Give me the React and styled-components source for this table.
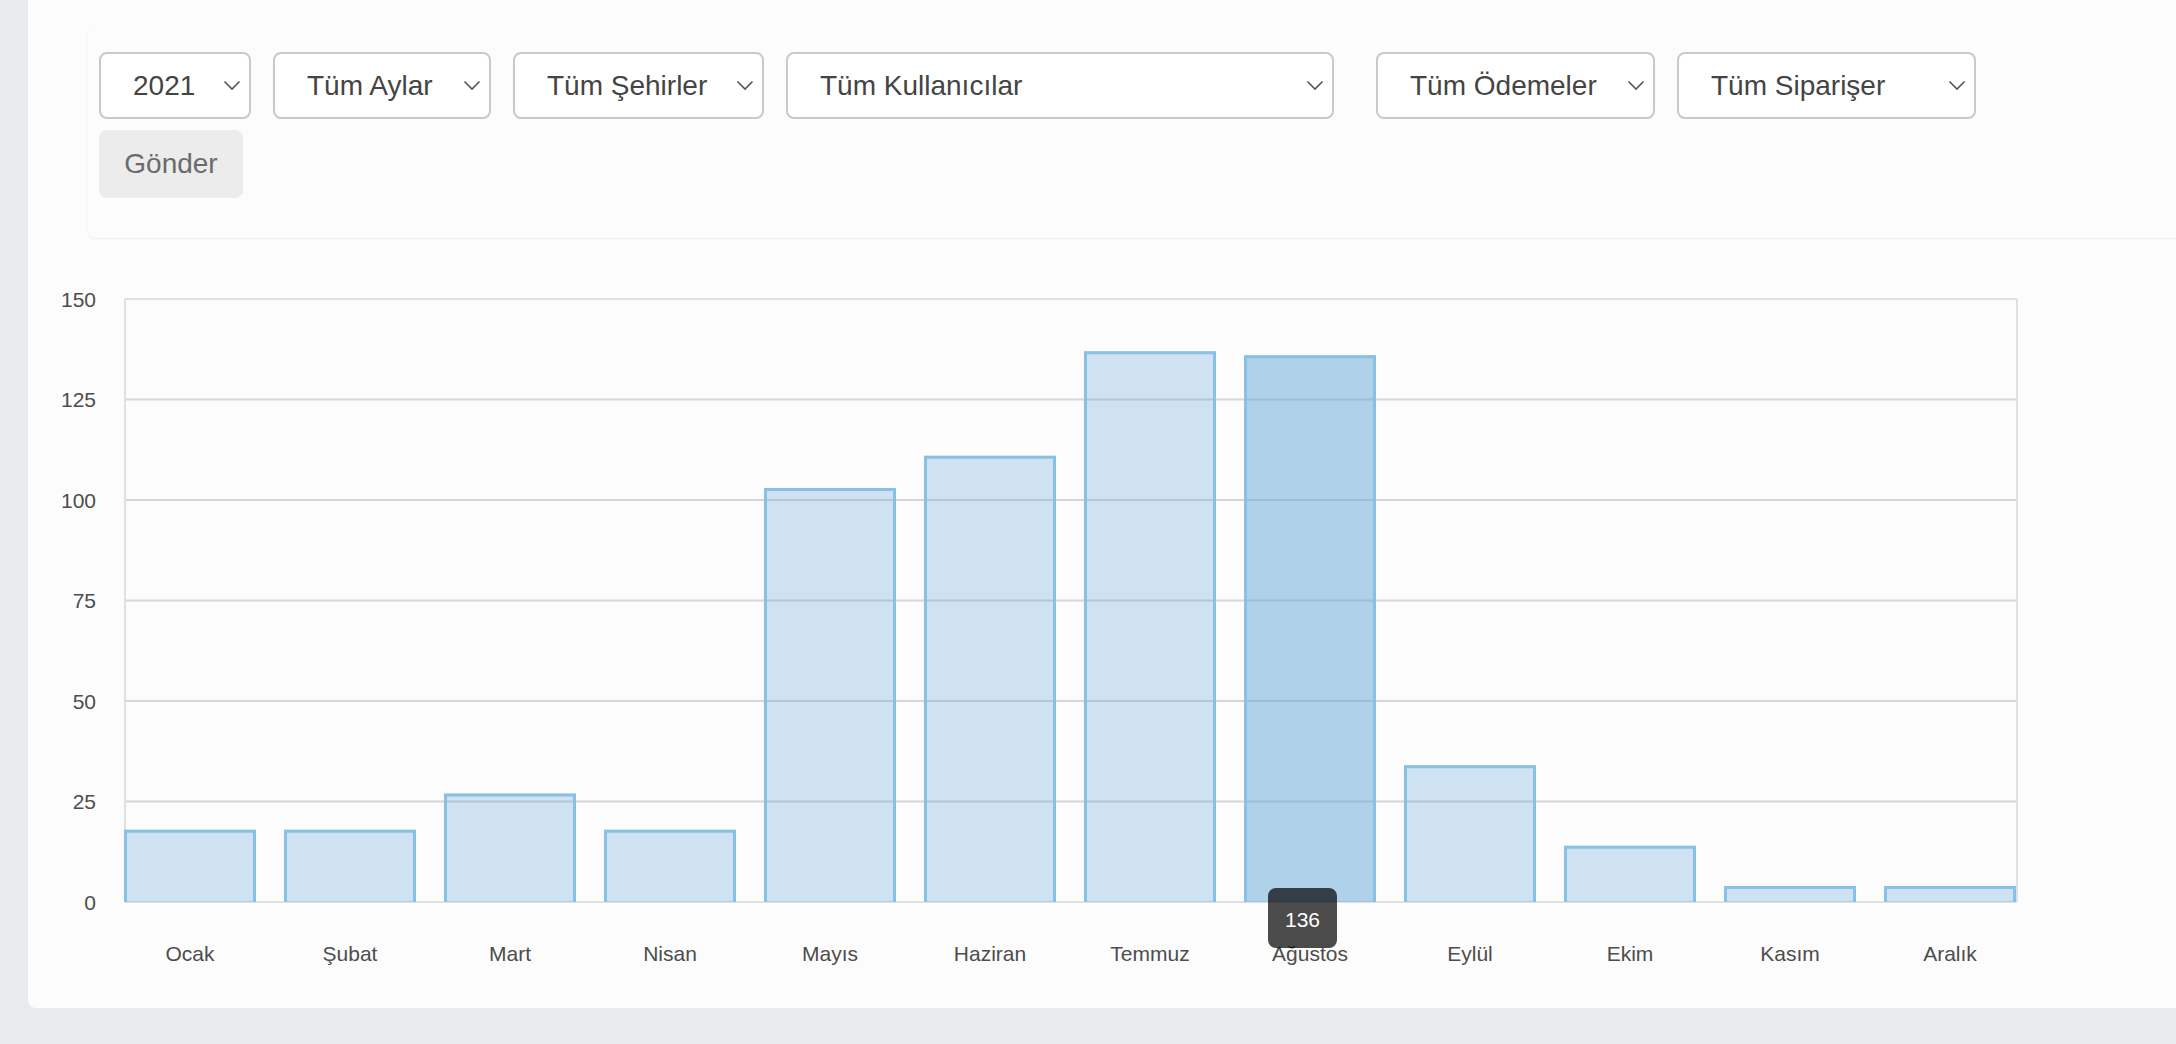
import React from 'react';
import styled, { createGlobalStyle } from 'styled-components';

const GlobalStyle = createGlobalStyle`
  html, body {
    margin: 0;
    padding: 0;
    background: #e9eaee;
    overflow: hidden;
  }
  body {
    font-family: "Liberation Sans", Arial, sans-serif;
  }
`;

const Page = styled.div`
  display: flex;
  height: 1044px;
  padding-left: 28px;
`;

const Panel = styled.div`
  flex: 1;
  height: 1008px;
  background: #fcfcfc;
  border-bottom-left-radius: 8px;
  padding-top: 27px;
  box-sizing: border-box;
  display: flex;
  flex-direction: column;
  overflow: hidden;
`;

const FilterCard = styled.div`
  margin-left: 60px;
  margin-right: -20px;
  padding: 25px 11px 40px;
  background: #fcfcfc;
  border-radius: 8px;
  box-shadow: 0 1px 2px rgba(0, 0, 0, 0.07);
`;

const FilterRow = styled.div`
  display: flex;
  gap: 22px;
`;

const SelectBox = styled.div`
  width: ${({ $width }) => $width}px;
  margin-left: ${({ $offset }) => $offset || 0}px;
  height: 67px;
  box-sizing: border-box;
  display: flex;
  align-items: center;
  justify-content: space-between;
  padding: 0 8px 0 32px;
  background: #fff;
  border: 2px solid #c9c9c9;
  border-radius: 8px;
  color: #444;
  font-size: 28px;
  cursor: default;
`;

const SubmitButton = styled.button`
  margin-top: 11px;
  width: 144px;
  height: 68px;
  border: none;
  border-radius: 8px;
  background: #ececec;
  color: #6b6b6b;
  font-family: "Liberation Sans", Arial, sans-serif;
  font-size: 28px;
  padding: 0;
`;

const ChartFrame = styled.svg`
  display: block;
  font-family: "Liberation Sans", Arial, sans-serif;
`;

const filters = [
  { label: '2021', width: 152 },
  { label: 'Tüm Aylar', width: 218 },
  { label: 'Tüm Şehirler', width: 251 },
  { label: 'Tüm Kullanıcılar', width: 548 },
  { label: 'Tüm Ödemeler', width: 279, offset: 20 },
  { label: 'Tüm Siparişer', width: 299 }
];

const months = [
  { name: 'Ocak', value: 18 },
  { name: 'Şubat', value: 18 },
  { name: 'Mart', value: 27 },
  { name: 'Nisan', value: 18 },
  { name: 'Mayıs', value: 103 },
  { name: 'Haziran', value: 111 },
  { name: 'Temmuz', value: 137 },
  { name: 'Ağustos', value: 136 },
  { name: 'Eylül', value: 34 },
  { name: 'Ekim', value: 14 },
  { name: 'Kasım', value: 4 },
  { name: 'Aralık', value: 4 }
];

function Chevron () {
  return (
    <svg width='18' height='11' viewBox='0 0 18 11'>
      <polyline points='1.5,1.5 9,9 16.5,1.5' fill='none' stroke='#555' strokeWidth='1.6' />
    </svg>
  );
}

function Select ({ label, width, offset }) {
  return (
    <SelectBox $width={width} $offset={offset}>
      <span>{label}</span>
      <Chevron />
    </SelectBox>
  );
}

// plot geometry, in svg units
const plot = { left: 97, top: 61, width: 1892, height: 603, max: 150 };
const pitch = 160;
const barWidth = 132;
const ticks = [150, 125, 100, 75, 50, 25, 0];
const hovered = 7;

function BarChart () {
  const bottom = plot.top + plot.height;
  const yOf = v => bottom - (v / plot.max) * plot.height;
  const tip = months[hovered];
  const tipX = plot.left - 1 + pitch * hovered + 24;

  return (
    <ChartFrame width='2040' height='770' viewBox='0 0 2040 770'>
      {ticks.map(t => (
        <g key={t}>
          <line
            x1={plot.left}
            x2={plot.left + plot.width}
            y1={yOf(t)}
            y2={yOf(t)}
            stroke={t === 0 || t === 150 ? '#e0e0e0' : '#d6d6d6'}
            strokeWidth='2'
          />
          <text x='68' y={yOf(t)} textAnchor='end' dominantBaseline='central' fontSize='21' fill='#4d4d4d'>
            {t}
          </text>
        </g>
      ))}
      <line x1={plot.left} x2={plot.left} y1={plot.top} y2={bottom} stroke='#e0e0e0' strokeWidth='2' />
      <line x1={plot.left + plot.width} x2={plot.left + plot.width} y1={plot.top} y2={bottom} stroke='#e0e0e0' strokeWidth='2' />

      {months.map((m, i) => {
        const x = plot.left - 1 + pitch * i;
        const top = yOf(m.value);
        return (
          <g key={m.name}>
            <rect
              x={x}
              y={top}
              width={barWidth}
              height={bottom - top}
              fill={i === hovered ? 'rgba(100, 165, 215, 0.5)' : 'rgba(100, 165, 215, 0.3)'}
            />
            <path
              d={`M${x + 1.5},${bottom} L${x + 1.5},${top + 1.5} L${x + barWidth - 1.5},${top + 1.5} L${x + barWidth - 1.5},${bottom}`}
              fill='none'
              stroke='#88c1e4'
              strokeWidth='3'
            />
            <text
              x={x + barWidth / 2}
              y='715'
              textAnchor='middle'
              dominantBaseline='central'
              fontSize='21'
              fill='#4d4d4d'
            >
              {m.name}
            </text>
          </g>
        );
      })}

      <g>
        <rect x={tipX} y='650' width='69' height='60' rx='8' fill='rgba(0, 0, 0, 0.7)' />
        <text
          x={tipX + 34.5}
          y='681'
          textAnchor='middle'
          dominantBaseline='central'
          fontSize='21'
          fill='#fff'
        >
          {tip.value}
        </text>
      </g>
    </ChartFrame>
  );
}

function App () {
  return (
    <Page>
      <GlobalStyle />
      <Panel>
        <FilterCard>
          <FilterRow>
            {filters.map(f => (
              <Select key={f.label} label={f.label} width={f.width} offset={f.offset} />
            ))}
          </FilterRow>
          <SubmitButton>Gönder</SubmitButton>
        </FilterCard>
        <BarChart />
      </Panel>
    </Page>
  );
}

export default App;
